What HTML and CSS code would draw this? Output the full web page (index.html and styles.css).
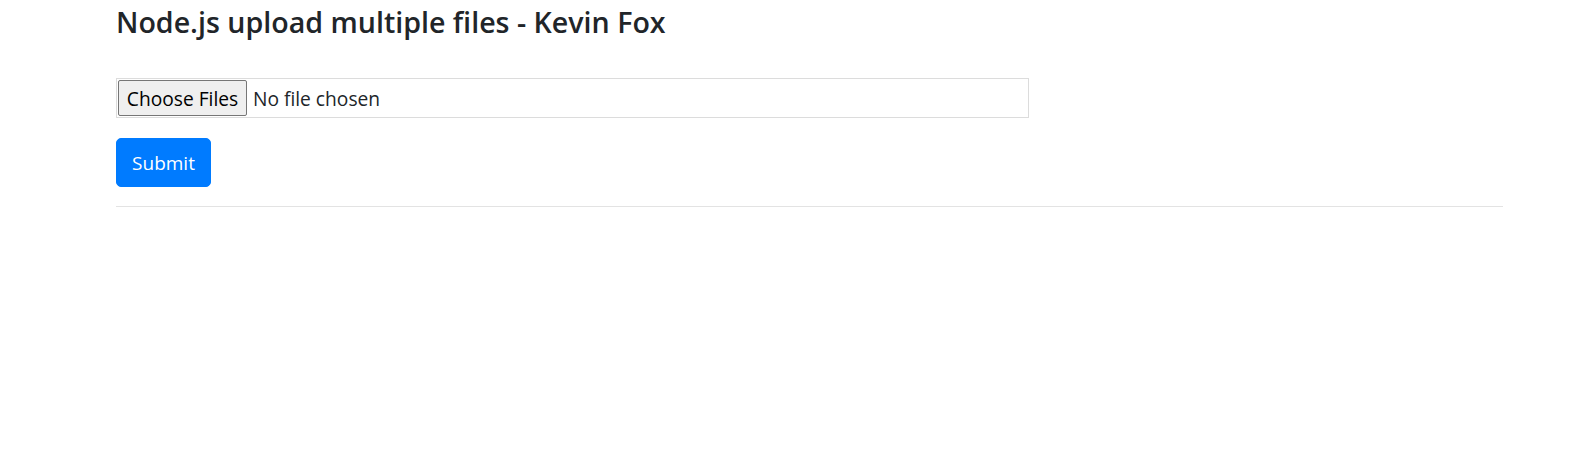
FILE: index.html
```html
<!DOCTYPE html>
<html lang="en">
<head>
<meta charset="utf-8">
<title>Node.js upload multiple files - Kevin Fox</title>
<link rel="stylesheet" href="styles.css">
</head>
<body>
<div class="container">
  <h4 class="title">Node.js upload multiple files - Kevin Fox</h4>
  <form class="upload-form" action="#" method="post" enctype="multipart/form-data">
    <div class="form-group">
      <input class="file-input" type="file" name="multi-files" multiple>
    </div>
    <div class="form-group">
      <button class="btn-primary" type="button">Submit</button>
    </div>
  </form>
  <hr class="divider">
</div>
</body>
</html>
```

FILE: styles.css
```css
html, body {
  margin: 0;
  padding: 0;
  background: #ffffff;
}

body {
  font-family: "Open Sans", "Noto Sans", "Liberation Sans", sans-serif;
  color: #212529;
  font-size: 19px;
}

.container {
  width: 1387px;
  padding: 0 0 0 116px;
  display: flex;
  flex-direction: column;
}

.title {
  margin: 0;
  padding-top: 4px;
  font-size: 28.6px;
  line-height: 36px;
  font-weight: 600;
  color: #212529;
}

.upload-form {
  margin-top: 38px;
  display: flex;
  flex-direction: column;
  gap: 20px;
}

.form-group {
  display: flex;
}

.file-input {
  box-sizing: border-box;
  width: 913px;
  height: 40px;
  margin: 0;
  padding: 1px 1px 2px 1px;
  border: 1px solid #dcdcdc;
  font-family: inherit;
  font-size: 19.2px;
  color: #212529;
  background: #fff;
}

.file-input::file-selector-button {
  box-sizing: border-box;
  height: 36px;
  width: 129px;
  margin: 0 6px 0 0;
  padding: 0;
  font-family: inherit;
  font-size: 19.2px;
  color: #000;
  background: #efefef;
  border: 1px solid #767676;
  border-radius: 2px;
}

.btn-primary {
  box-sizing: border-box;
  width: 95px;
  height: 49px;
  padding: 0;
  border: 1px solid #007bff;
  border-radius: 5px;
  background: #007bff;
  color: #fff;
  font-family: inherit;
  font-size: 19px;
  cursor: pointer;
}

.divider {
  width: 1387px;
  margin: 19px 0 0 0;
  border: 0;
  border-top: 1px solid #e3e3e3;
  height: 0;
}
```
